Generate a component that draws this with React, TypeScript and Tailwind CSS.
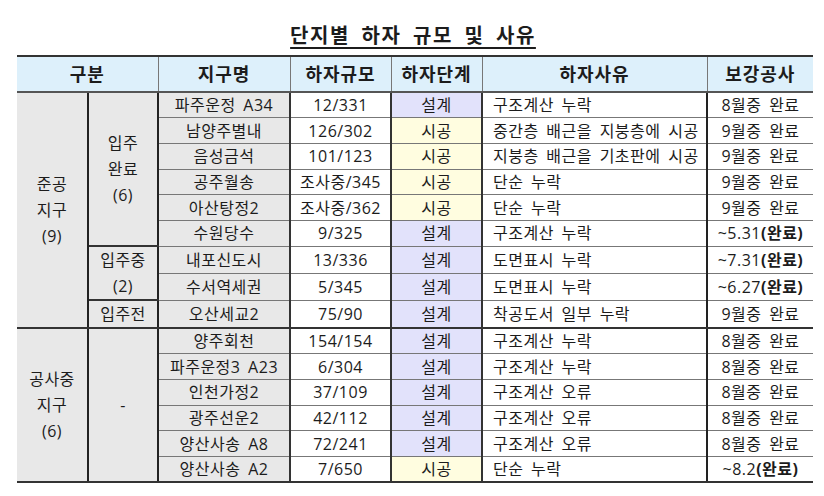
import React from 'react';

type Row = {
    name: string;
    scale: string;
    stage: '설계' | '시공';
    reason: string;
    fix: string;
    done?: boolean;
};

const rows: Row[] = [
    { name: '파주운정 A34', scale: '12/331', stage: '설계', reason: '구조계산 누락', fix: '8월중 완료' },
    { name: '남양주별내', scale: '126/302', stage: '시공', reason: '중간층 배근을 지붕층에 시공', fix: '9월중 완료' },
    { name: '음성금석', scale: '101/123', stage: '시공', reason: '지붕층 배근을 기초판에 시공', fix: '9월중 완료' },
    { name: '공주월송', scale: '조사중/345', stage: '시공', reason: '단순 누락', fix: '9월중 완료' },
    { name: '아산탕정2', scale: '조사중/362', stage: '시공', reason: '단순 누락', fix: '9월중 완료' },
    { name: '수원당수', scale: '9/325', stage: '설계', reason: '구조계산 누락', fix: '~5.31', done: true },
    { name: '내포신도시', scale: '13/336', stage: '설계', reason: '도면표시 누락', fix: '~7.31', done: true },
    { name: '수서역세권', scale: '5/345', stage: '설계', reason: '도면표시 누락', fix: '~6.27', done: true },
    { name: '오산세교2', scale: '75/90', stage: '설계', reason: '착공도서 일부 누락', fix: '9월중 완료' },
    { name: '양주회천', scale: '154/154', stage: '설계', reason: '구조계산 누락', fix: '8월중 완료' },
    { name: '파주운정3 A23', scale: '6/304', stage: '설계', reason: '구조계산 누락', fix: '8월중 완료' },
    { name: '인천가정2', scale: '37/109', stage: '설계', reason: '구조계산 오류', fix: '8월중 완료' },
    { name: '광주선운2', scale: '42/112', stage: '설계', reason: '구조계산 오류', fix: '8월중 완료' },
    { name: '양산사송 A8', scale: '72/241', stage: '설계', reason: '구조계산 오류', fix: '8월중 완료' },
    { name: '양산사송 A2', scale: '7/650', stage: '시공', reason: '단순 누락', fix: '~8.2', done: true },
];

// 1st / 2nd column groups keyed by the row index where they start
const groupA: Record<number, { span: number; label: string[] }> = {
    0: { span: 9, label: ['준공', '지구', '(9)'] },
    9: { span: 6, label: ['공사중', '지구', '(6)'] },
};
const groupB: Record<number, { span: number; label: string[] }> = {
    0: { span: 6, label: ['입주', '완료', '(6)'] },
    6: { span: 2, label: ['입주중', '(2)'] },
    8: { span: 1, label: ['입주전'] },
    9: { span: 6, label: ['-'] },
};

const th = 'h-[36px] bg-[#ddf0fb] text-[18px] font-bold tracking-[1px] text-center border-t-2 border-t-[#333] border-b-2 border-b-[#555] border-r border-r-[#777] p-0';

export default function App() {
    return (
        <div className="w-[824px] h-[496px] bg-white pt-[22px] font-['Open_Sans','Noto_Sans_CJK_KR',sans-serif] text-[#1c1c1c]">
            <h1 className="text-center text-[20px] leading-[28px] font-bold tracking-[1.5px] [word-spacing:5px] underline underline-offset-[4px] decoration-[1.5px] pl-[2px]">
                단지별 하자 규모 및 사유
            </h1>
            <div className="pl-[17px] pt-[5px]">
                <table className="border-collapse text-[16px] leading-none tracking-[0.5px] [word-spacing:3px]">
                    <colgroup>
                        <col className="w-[71px]" />
                        <col className="w-[70px]" />
                        <col className="w-[132px]" />
                        <col className="w-[101px]" />
                        <col className="w-[91px]" />
                        <col className="w-[225px]" />
                        <col className="w-[106px]" />
                    </colgroup>
                    <thead>
                        <tr>
                            <th colSpan={2} className={th}>구분</th>
                            <th className={th}>지구명</th>
                            <th className={th}>하자규모</th>
                            <th className={th}>하자단계</th>
                            <th className={th}>하자사유</th>
                            <th className={`${th} border-r-0`}>보강공사</th>
                        </tr>
                    </thead>
                    <tbody>
                        {rows.map((r, i) => {
                            const a = groupA[i];
                            const b = groupB[i];
                            const sectionEnd = i === 8 || i === 14;
                            const rowLine = sectionEnd ? 'border-b-2 border-b-[#333]' : 'border-b-[1.5px] border-b-[#777]';
                            return (
                                <tr key={i} className="h-[25.7px]">
                                    {a && (
                                        <td rowSpan={a.span} className="bg-[#e8e8e8] text-center align-middle leading-[26px] border-r-2 border-r-[#222] border-b-2 border-b-[#333] p-0">
                                            {a.label.map(l => <div key={l}>{l}</div>)}
                                        </td>
                                    )}
                                    {b && (
                                        <td rowSpan={b.span} className="bg-[#e8e8e8] text-center align-middle leading-[26px] border-r-2 border-r-[#222] border-b-2 border-b-[#333] p-0">
                                            {b.label.map(l => <div key={l}>{l}</div>)}
                                        </td>
                                    )}
                                    <td className={`bg-[#e8e8e8] text-center border-r-2 border-r-[#333] p-0 ${rowLine}`}>{r.name}</td>
                                    <td className={`bg-white text-center border-r-2 border-r-[#333] p-0 ${rowLine}`}>{r.scale}</td>
                                    <td className={`${r.stage === '설계' ? 'bg-[#e2e2fb]' : 'bg-[#fffde0]'} text-center border-r-2 border-r-[#333] p-0 ${rowLine}`}>{r.stage}</td>
                                    <td className={`bg-white text-left pl-[10px] border-r-2 border-r-[#222] ${rowLine}`}>{r.reason}</td>
                                    <td className={`bg-white text-center p-0 ${rowLine}`}>
                                        {r.fix}
                                        {r.done && <span className="font-bold">(완료)</span>}
                                    </td>
                                </tr>
                            );
                        })}
                    </tbody>
                </table>
            </div>
        </div>
    );
}
